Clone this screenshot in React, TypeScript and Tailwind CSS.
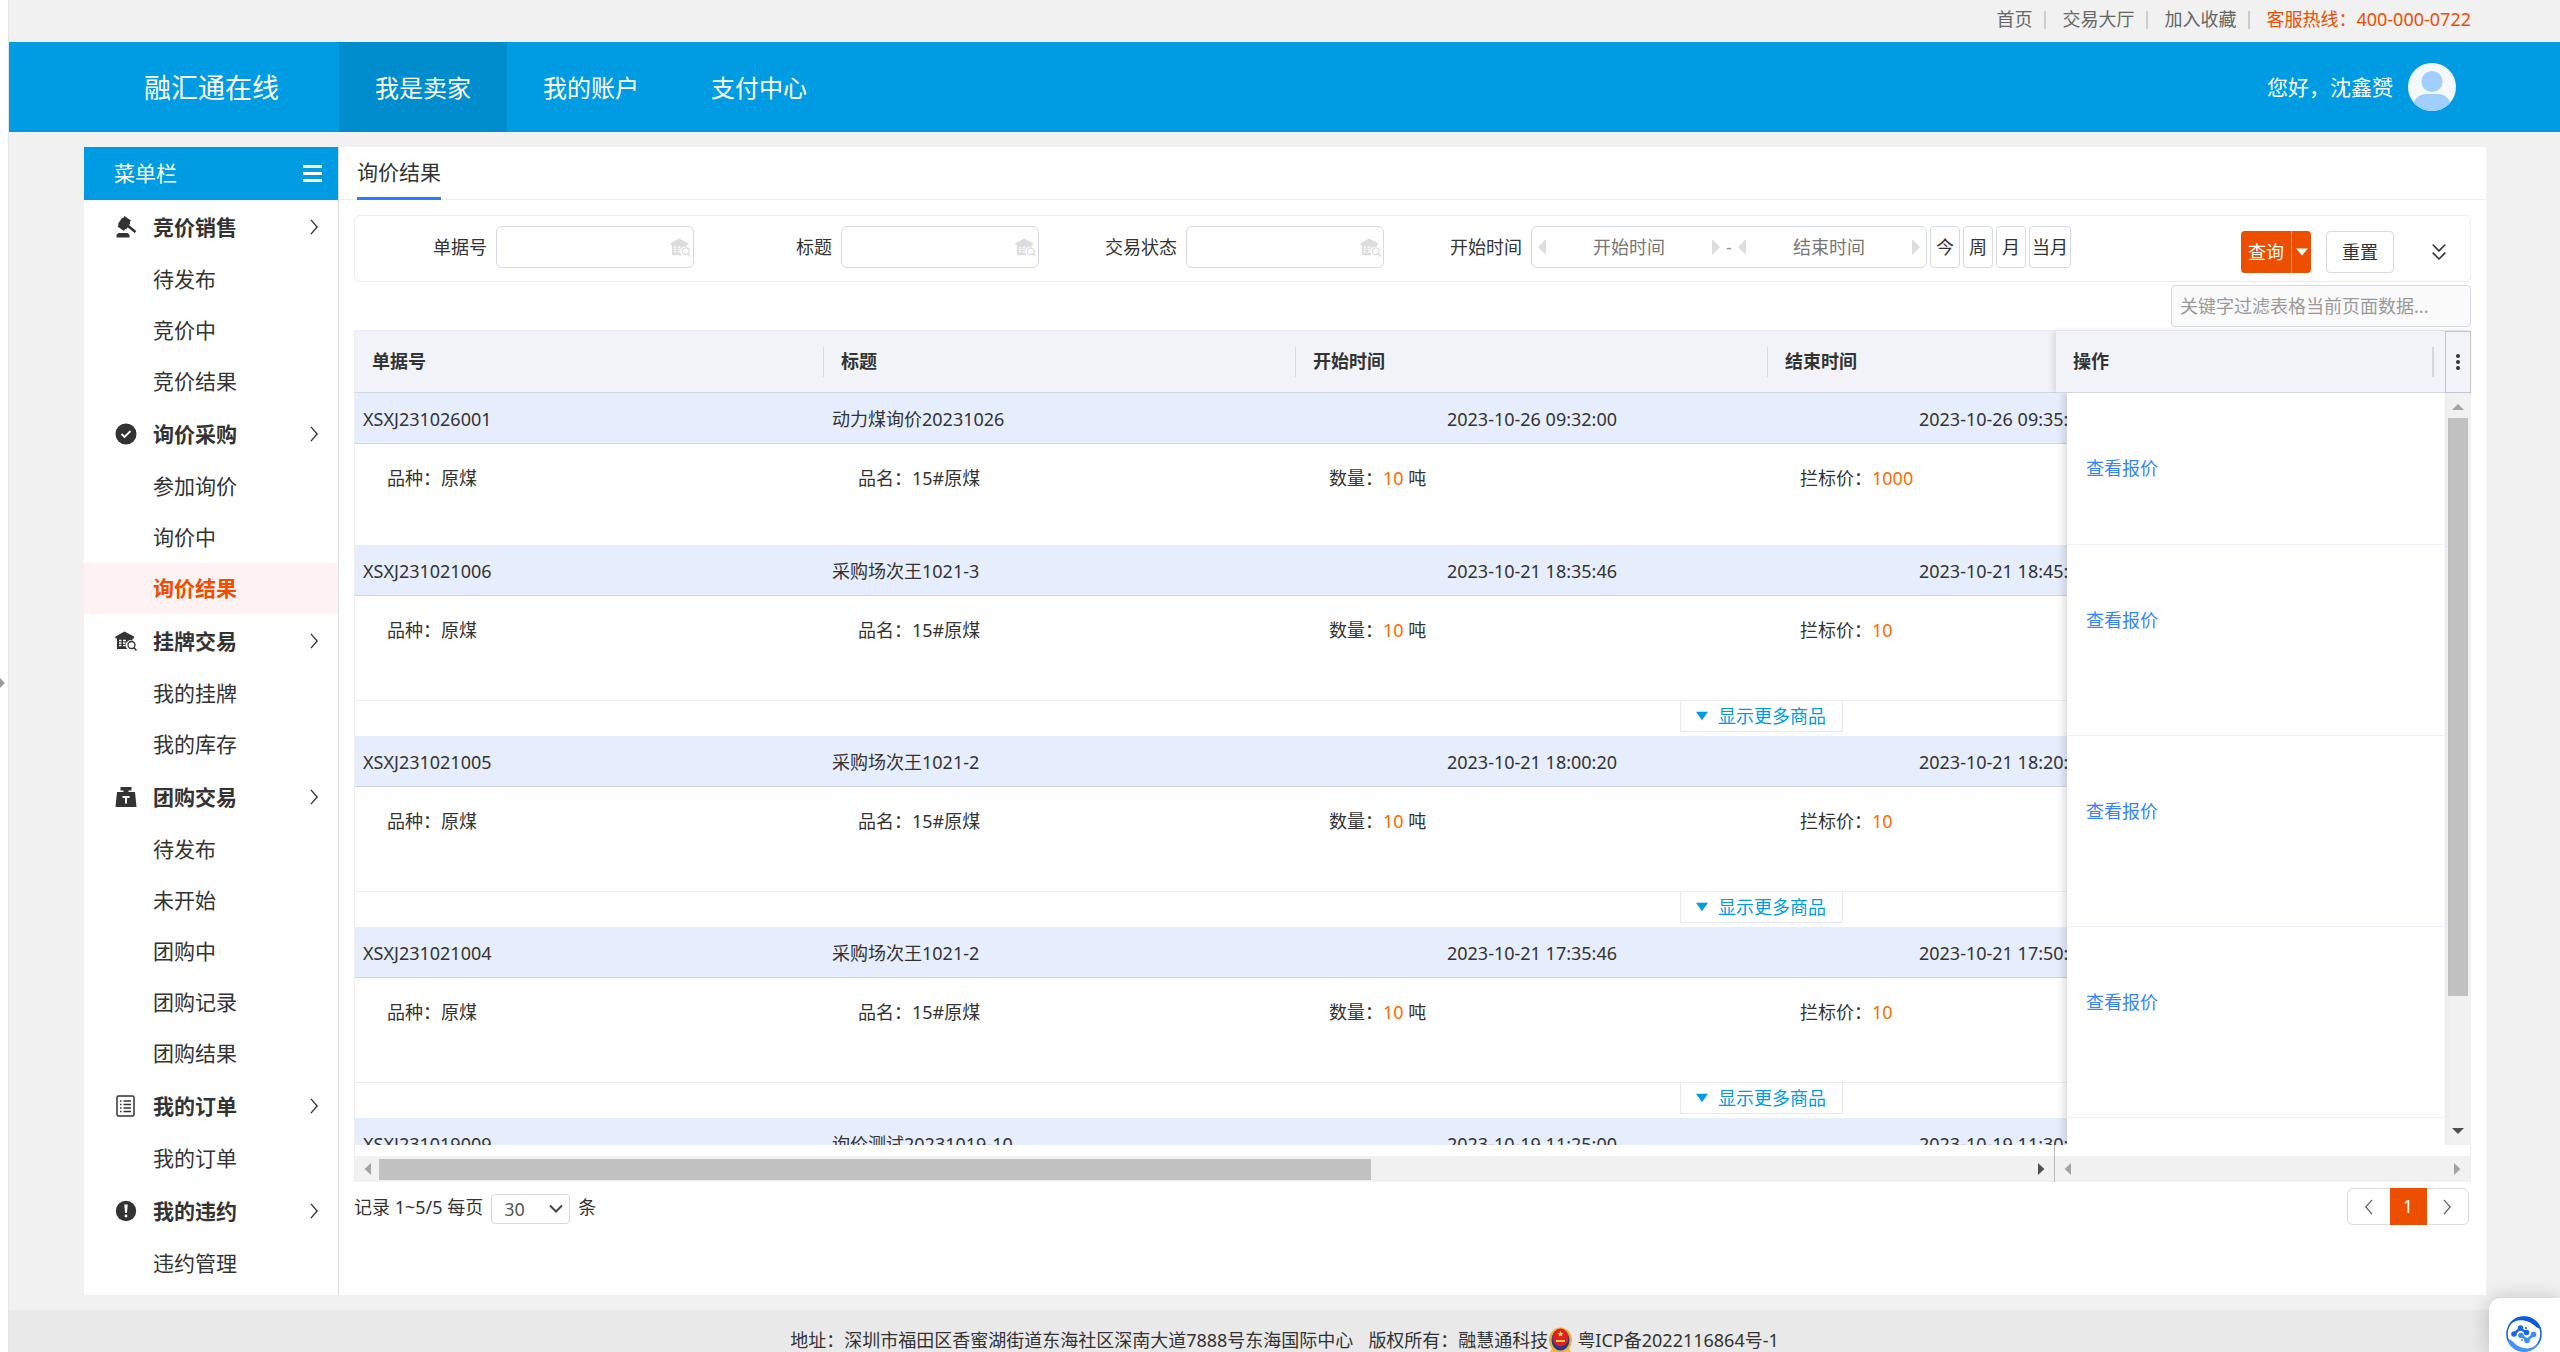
import { useState } from 'react';
import { ChevronsDown } from 'lucide-react';

const menu = [
  { title: '竞价销售', icon: 'gavel', items: ['待发布', '竞价中', '竞价结果'] },
  { title: '询价采购', icon: 'check', items: ['参加询价', '询价中', '询价结果'] },
  { title: '挂牌交易', icon: 'house', items: ['我的挂牌', '我的库存'] },
  { title: '团购交易', icon: 'weight', items: ['待发布', '未开始', '团购中', '团购记录', '团购结果'] },
  { title: '我的订单', icon: 'list', items: ['我的订单'] },
  { title: '我的违约', icon: 'alert', items: ['违约管理'] },
];

const rows = [
  { no: 'XSXJ231026001', title: '动力煤询价20231026', start: '2023-10-26 09:32:00', end: '2023-10-26 09:35:00', price: '1000', more: false },
  { no: 'XSXJ231021006', title: '采购场次王1021-3', start: '2023-10-21 18:35:46', end: '2023-10-21 18:45:46', price: '10', more: true },
  { no: 'XSXJ231021005', title: '采购场次王1021-2', start: '2023-10-21 18:00:20', end: '2023-10-21 18:20:20', price: '10', more: true },
  { no: 'XSXJ231021004', title: '采购场次王1021-2', start: '2023-10-21 17:35:46', end: '2023-10-21 17:50:46', price: '10', more: true },
  { no: 'XSXJ231019009', title: '询价测试20231019-10', start: '2023-10-19 11:25:00', end: '2023-10-19 11:30:00', price: '10', more: true },
];

function HouseIcon({ className }: { className?: string }) {
  return (
    <svg viewBox="0 0 22 22" className={className}>
      <path d="M9.500 1.500 19 6.500v2h-1.500v2a5 5 0 0 0-5 8.500H2V8.500H.5v-2Z" fill="currentColor" />
      <path d="M4 10.500h2.500M8 10.500h3M4 13h2.500M8 13h2.500M4 15.500h2.500M8 15.500h2.500" stroke="#fff" strokeWidth="1.300" />
      <circle cx="16.500" cy="15" r="3.500" fill="none" stroke="currentColor" strokeWidth="1.300" />
      <path d="m18.800 17.600 2.700 2.900" stroke="currentColor" strokeWidth="1.500" />
    </svg>
  );
}

function MenuIcon({ name }: { name: string }) {
  if (name === 'house') return <HouseIcon className="h-[22px] w-[22px]" />;
  return (
    <svg viewBox="0 0 22 22" className="h-[22px] w-[22px]" fill="currentColor">
      {name === 'gavel' && (
        <>
          <path d="m9.500 0 6.500 4.500-1.200 1.600.4 1.400-3.700 5.500-1.500.3L9 15 2.500 10.500l1-1.500-.3-1.500 3.700-5.300 1.500-.4Z" />
          <path d="m12.500 9.500 8 6.500" stroke="currentColor" strokeWidth="2.600" />
          <path d="M3.500 17h9l2 2v2.500h-13V19Z" />
        </>
      )}
      {name === 'check' && (
        <>
          <circle cx="11" cy="11" r="10.500" />
          <path d="m6.500 11 3 3 6-6" fill="none" stroke="#fff" strokeWidth="1.800" />
        </>
      )}
      {name === 'weight' && (
        <>
          <path d="M5.500 1h11v3.500h-3V6H20l1.500 15H.5L2 6h6.500V4.500h-3Z" />
          <path d="M7.500 11h7M11 11v6.500" stroke="#fff" strokeWidth="2" />
        </>
      )}
      {name === 'list' && (
        <>
          <rect x="2" y="1" width="17" height="20" rx="1.500" fill="none" stroke="currentColor" strokeWidth="1.500" />
          <path d="M5 6h1.500M8.500 6h7.500M5 9.500h1.500M8.500 9.500h7.500M5 13h1.500M8.500 13h7.500M5 16.500h1.500M8.500 16.500h7.500" stroke="currentColor" strokeWidth="1.300" />
        </>
      )}
      {name === 'alert' && (
        <>
          <circle cx="11" cy="11" r="10.200" />
          <path d="M9.300 4.500h3.400L12 13h-2Z" fill="#fff" />
          <circle cx="11" cy="16" r="1.400" fill="#fff" />
        </>
      )}
    </svg>
  );
}

function Chevron({ left, className }: { left?: boolean; className?: string }) {
  return (
    <svg viewBox="0 0 10 18" className={className} fill="none" stroke="currentColor" strokeWidth="1.500">
      <path d={left ? 'M9 1 2 9l7 8' : 'M1 1l7 8-7 8'} />
    </svg>
  );
}

function Triangle({ dir, className }: { dir: 'left' | 'right' | 'up' | 'down'; className?: string }) {
  const paths = {
    left: 'M10 0v10L2 5Z',
    right: 'M0 0v10l8-5Z',
    up: 'M0 8h10L5 2Z',
    down: 'M0 2h10L5 8Z',
  };
  return (
    <svg viewBox="0 0 10 10" preserveAspectRatio="none" className={className} fill="currentColor">
      <path d={paths[dir]} />
    </svg>
  );
}

function TopBar() {
  return (
    <div className="flex h-[42px] items-center justify-end bg-[#f1f1f1] pr-[89px] pb-[3px] text-[#666]">
      {['首页', '交易大厅', '加入收藏'].map((t) => (
        <div key={t} className="flex items-center">
          <a href="#">{t}</a>
          <span className="mr-4 ml-3 h-[18px] w-[2px] bg-[#ccc]" />
        </div>
      ))}
      <span className="text-[#ed4e00]">客服热线：400-000-0722</span>
    </div>
  );
}

function Header() {
  return (
    <header className="flex h-[90px] items-center justify-between bg-[#009ce3] pr-[104px] text-white">
      <div className="flex h-full items-center">
        <div className="w-[330px] pl-[135px] text-[27px]">融汇通在线</div>
        <nav className="flex h-full text-[24px]">
          {['我是卖家', '我的账户', '支付中心'].map((t, i) => (
            <a key={t} href="#" className={`flex h-full w-[168px] items-center justify-center ${i === 0 ? 'bg-[#008dcd]' : ''}`}>
              {t}
            </a>
          ))}
        </nav>
      </div>
      <div className="flex items-center gap-[15px] text-[21px]">
        <span>您好，沈鑫赟</span>
        <svg viewBox="0 0 48 48" className="h-12 w-12">
          <clipPath id="face">
            <circle cx="24" cy="24" r="24" />
          </clipPath>
          <g clipPath="url(#face)">
            <rect width="48" height="48" fill="#f4f9ff" />
            <circle cx="24" cy="18.500" r="10.500" fill="#a0ceff" />
            <path d="M4 48c0-10 6-17 14-17h12c8 0 14 7 14 17Z" fill="#a0ceff" />
          </g>
        </svg>
      </div>
    </header>
  );
}

function Sidebar() {
  const [active, setActive] = useState('询价结果');
  return (
    <aside className="w-[255px] shrink-0 border-r border-[#ddd] bg-white pb-[6px] text-[21px]">
      <div className="flex h-[53px] items-center justify-between bg-[#009ce3] pr-4 pl-[30px] text-white">
        <span>菜单栏</span>
        <button aria-label="收起菜单" className="flex w-[19px] flex-col gap-1">
          <span className="h-[3px] bg-white" />
          <span className="h-[3px] bg-white" />
          <span className="h-[3px] bg-white" />
        </button>
      </div>
      {menu.map((group) => (
        <div key={group.title}>
          <button className="flex h-[54px] w-full items-center pr-[19px] pl-[31px] font-bold">
            <MenuIcon name={group.icon} />
            <span className="ml-4 flex-1 text-left">{group.title}</span>
            <Chevron className="h-4 w-[9px]" />
          </button>
          {group.items.map((item) => (
            <a
              key={item}
              href="#"
              onClick={() => setActive(item)}
              className={`flex h-[51px] items-center pl-[69px] ${item === active ? 'bg-[#fef2f3] font-bold text-[#ed4e00]' : ''}`}
            >
              {item}
            </a>
          ))}
        </div>
      ))}
    </aside>
  );
}

function SearchField({ label }: { label: string }) {
  return (
    <label className="flex w-[345px] items-center justify-end">
      {label}
      <span className="mr-[6px] ml-[9px] flex h-[42px] w-[198px] items-center rounded-md border border-[#d5d9e4] pr-[2px]">
        <input className="h-full min-w-0 flex-1 px-2 outline-none" />
        <HouseIcon className="h-[21px] w-[21px] text-[#dcdcdc]" />
      </span>
    </label>
  );
}

function DateField({ label }: { label: string }) {
  return (
    <span className="flex flex-1 items-center justify-between px-1 text-[#ddd]">
      <Triangle dir="left" className="h-4 w-[10px]" />
      <input aria-label={label} placeholder={label} className="w-[120px] text-center text-[#777] outline-none placeholder:text-[#777]" />
      <Triangle dir="right" className="h-4 w-[10px]" />
    </span>
  );
}

function FilterBar() {
  return (
    <form className="mx-[15px] mt-[15px] flex h-[67px] justify-between rounded-md border border-[#eee] pt-[10px]">
      <div className="flex h-[42px] items-center">
        <div className="flex pr-[60px]">
          <SearchField label="单据号" />
          <SearchField label="标题" />
          <SearchField label="交易状态" />
        </div>
        <span>开始时间</span>
        <div className="mr-[3px] ml-[9px] flex h-[42px] w-[396px] items-center rounded-md border border-[#d5d9e4]">
          <DateField label="开始时间" />
          <span className="text-[#999]">-</span>
          <DateField label="结束时间" />
        </div>
        <div className="flex gap-[3px]">
          {['今', '周', '月', '当月'].map((t) => (
            <button key={t} type="button" className="h-[42px] min-w-[30px] rounded border border-[#d5d9e4] px-[2px]">
              {t}
            </button>
          ))}
        </div>
      </div>
      <div className="flex h-[42px] items-center pt-[10px] pr-[17px]">
        <button type="button" className="h-[42px] w-[50px] rounded-l bg-[#ed4e00] text-white">查询</button>
        <button type="button" aria-label="更多查询" className="flex h-[42px] w-5 items-center justify-center rounded-r border-l border-[#f5a37c] bg-[#ed4e00] text-white">
          <Triangle dir="down" className="h-3 w-3" />
        </button>
        <button type="button" className="mx-[15px] h-[42px] w-[68px] rounded border border-[#d5d9e4]">重置</button>
        <button type="button" aria-label="展开" className="ml-4">
          <ChevronsDown className="h-7 w-7" strokeWidth={1.4} />
        </button>
      </div>
    </form>
  );
}

function ResultTable() {
  return (
    <div className="mx-[15px] mt-[3px]">
      <div className="grid grid-cols-[minmax(0,1fr)_415px] border-t border-l border-[#eee] bg-[#f2f3f9]">
        <div className="flex h-[62px] items-center overflow-hidden border-b border-[#d2d6e5] font-bold">
          {['单据号', '标题', '开始时间', '结束时间'].map((t, i) => (
            <div key={t} className={`flex h-[30px] shrink-0 items-center border-r border-[#d5d8e0] pl-[17px] ${i === 0 ? 'w-[469px]' : 'w-[472px]'}`}>
              {t}
            </div>
          ))}
        </div>
        <div className="flex h-[62px] items-center border-b border-[#d2d6e5] pl-[17px] font-bold shadow-[-3px_0_6px_rgba(0,0,0,0.1)]">
          <span>操作</span>
          <span className="mr-[11px] ml-auto h-[30px] w-[2px] bg-[#d5d8e0]" />
          <button aria-label="列设置" className="flex h-[62px] w-[26px] flex-col items-center justify-center gap-[2px] border border-[#c5c6cc]">
            <i className="h-1 w-1 rounded-full bg-[#333]" />
            <i className="h-1 w-1 rounded-full bg-[#333]" />
            <i className="h-1 w-1 rounded-full bg-[#333]" />
          </button>
        </div>
      </div>

      <div className="flex h-[752px] overflow-hidden border-l border-[#eee]">
        <div className="min-w-0 flex-1 overflow-hidden">
          {rows.map((row) => (
            <div key={row.no} className="w-[1920px]">
              <div className="flex h-[51px] items-center border-b border-[#d0d5e0] bg-[#e6edfd] pt-[3px]">
                <div className="w-[469px] pl-2">{row.no}</div>
                <div className="w-[472px] pl-2">{row.title}</div>
                <div className="w-[472px] text-center">{row.start}</div>
                <div className="w-[472px] text-center">{row.end}</div>
              </div>
              <div className={`flex pt-[21px] pl-8 ${row.more ? 'h-[105px] border-b border-[#ebedf3]' : 'h-[101px]'}`}>
                <div className="w-[471px] shrink-0">品种：原煤</div>
                <div className="w-[471px] shrink-0">品名：15#原煤</div>
                <div className="w-[471px] shrink-0">
                  数量：<span className="text-[#ff6a00]">10</span> 吨
                </div>
                <div className="w-[471px] shrink-0">
                  拦标价：<span className="text-[#ff6a00]">{row.price}</span>
                </div>
              </div>
              {row.more && (
                <div className="flex h-[35px] items-start pl-[1325px]">
                  <button className="flex h-[31px] w-[163px] items-center gap-[10px] border border-t-0 border-[#e6e9f0] pl-[15px] text-[#009ce3]">
                    <Triangle dir="down" className="h-[14px] w-3" />
                    显示更多商品
                  </button>
                </div>
              )}
            </div>
          ))}
        </div>
        <div className="z-10 w-[378px] shrink-0 bg-white shadow-[-3px_0_8px_rgba(0,0,0,0.15)]">
          {rows.map((row) => (
            <div key={row.no} className={`border-b border-[#eef1f8] pt-[62px] pl-[19px] ${row.more ? 'h-[191px]' : 'h-[152px]'}`}>
              <a href="#" className="text-[#3385ff]">查看报价</a>
            </div>
          ))}
        </div>
        <div className="flex w-[26px] shrink-0 flex-col items-center bg-[#f1f1f1] pt-[9px] pb-[9px]">
          <Triangle dir="up" className="h-[10px] w-3 text-[#a3a3a3]" />
          <div className="mt-[6px] h-[578px] w-5 bg-[#c1c1c1]" />
          <Triangle dir="down" className="mt-auto h-[10px] w-3 text-[#505050]" />
        </div>
      </div>

      {/* horizontal scrollbars */}
      <div className="grid grid-cols-[minmax(0,1fr)_415px] border-x border-[#eee]">
        <div className="flex border-r border-[#bbb] pt-[11px]">
          <div className="flex h-[26px] flex-1 items-center bg-[#f1f1f1] px-2">
            <Triangle dir="left" className="h-3 w-2 text-[#a3a3a3]" />
            <div className="ml-2 h-[21px] w-[992px] bg-[#c1c1c1]" />
            <Triangle dir="right" className="ml-auto h-3 w-2 text-[#505050]" />
          </div>
        </div>
        <div className="mt-[11px] flex h-[26px] items-center justify-between bg-[#f1f1f1] px-2 text-[#a3a3a3]">
          <Triangle dir="left" className="h-3 w-2" />
          <Triangle dir="right" className="h-3 w-2" />
        </div>
      </div>
    </div>
  );
}

function Pager() {
  return (
    <div className="mr-[17px] ml-[15px] flex justify-between pt-[6px]">
      <div className="flex h-[38px] items-center gap-2">
        <label htmlFor="page-size">记录 1~5/5 每页</label>
        <span className="relative mt-1 flex items-center">
          <select id="page-size" className="h-[30px] w-[79px] appearance-none rounded border border-[#d5d9e4] bg-white pl-3 text-[#555]">
            <option>30</option>
            <option>50</option>
          </select>
          <svg viewBox="0 0 14 10" className="pointer-events-none absolute right-[7px] h-[10px] w-[14px]" fill="none" stroke="#444" strokeWidth="2">
            <path d="m1 1.500 6 6 6-6" />
          </svg>
        </span>
        <span>条</span>
      </div>
      <div className="flex h-[37px] w-[122px] rounded-md border border-[#ddd] text-[#666]">
        <button aria-label="上一页" className="flex flex-1 items-center justify-center">
          <Chevron left className="h-4 w-[9px]" />
        </button>
        <button className="-my-px w-[37px] bg-[#ed4e00] text-white">1</button>
        <button aria-label="下一页" className="flex flex-1 items-center justify-center">
          <Chevron className="h-4 w-[9px]" />
        </button>
      </div>
    </div>
  );
}

function Emblem() {
  return (
    <svg viewBox="0 0 25 28" className="h-7 w-[25px]">
      <path d="M5 18h15l4 10H1Z" fill="#f3c04a" />
      <ellipse cx="12.500" cy="13" rx="11.500" ry="12.500" fill="#e9b13a" />
      <ellipse cx="12.500" cy="13" rx="9" ry="10.500" fill="#26388f" />
      <ellipse cx="12.500" cy="10.500" rx="8" ry="9" fill="#e02020" />
      <path d="m12.500 4 1 2h2l-1.500 1.500.5 2-2-1-2 1 .5-2L9.500 6h2Z" fill="#ffd84a" />
      <path d="M8 13h9v2H8Z" fill="#ffd84a" />
    </svg>
  );
}

function ChatWidget() {
  return (
    <button aria-label="在线客服" className="fixed right-0 bottom-0 flex h-[54px] w-[71px] items-start rounded-tl-xl bg-white pt-[18px] pl-[17px] shadow-[0_0_20px_rgba(0,0,0,0.2)]">
      <svg viewBox="0 0 36 36" className="h-9 w-9">
        <circle cx="18" cy="18" r="17" fill="#fff" stroke="#1a66e0" strokeWidth="1.600" />
        <path d="M2 10C7 1 16-1 24 1.500c6 2 10 7 11 11.500-5-1-6-4-12-7C15 2.500 8 4 2 10Z" fill="#0b5be0" />
        <path d="M34 26c-5 9-14 11-22 8.500-6-2-9-6-10-11.500 5 1 6 5 12 8 8 3 14 1 20-5Z" fill="#4394fa" />
        <g stroke="#1767e6" strokeWidth="2.600" fill="#1767e6">
          <path d="m8 18 6-5.500 6.500 4" fill="none" />
          <circle cx="8" cy="18" r="1.500" />
          <circle cx="14.500" cy="12" r="1.500" />
          <circle cx="20.500" cy="16.500" r="1.500" />
        </g>
        <g stroke="#3d8df7" strokeWidth="2.600" fill="#3d8df7">
          <path d="m15 19.500 6.500 4.500 6-5.500" fill="none" />
          <circle cx="15" cy="19.500" r="1.500" />
          <circle cx="21" cy="24.500" r="1.500" />
          <circle cx="27.500" cy="18.500" r="1.500" />
        </g>
        <circle cx="20" cy="12" r="1.100" fill="#1767e6" />
        <circle cx="16" cy="24" r="1.100" fill="#3d8df7" />
      </svg>
    </button>
  );
}

export default function App() {
  return (
    <div className="flex h-screen overflow-hidden bg-white font-['Noto_Sans','Noto_Sans_CJK_SC',sans-serif] text-[18px] leading-[27px] text-[#333]">
      <div className="flex w-2 shrink-0 items-center pt-[14px] text-[#999]">
        <Triangle dir="right" className="h-[10px] w-[6px]" />
      </div>
      <div className="min-w-0 flex-1 border-l border-[#e5e5e5] bg-[#f1f1f1]">
        <TopBar />
        <Header />
        <div className="mt-[15px] mr-[74px] ml-[75px] flex">
          <Sidebar />
          <main className="min-w-0 flex-1 bg-white">
            <div className="flex h-[53px] border-b border-[#eee] pl-[18px] text-[21px]">
              <button className="-mb-px border-b-3 border-[#2b7bff]">询价结果</button>
            </div>
            <FilterBar />
            <div className="mx-[15px] mt-[3px] flex justify-end">
              <input
                aria-label="关键字过滤"
                placeholder="关键字过滤表格当前页面数据..."
                className="h-[42px] w-[300px] rounded border border-[#d5d9e4] bg-[#fafafa] px-2 outline-none placeholder:text-[#999]"
              />
            </div>
            <ResultTable />
            <Pager />
          </main>
        </div>
        <footer className="mt-[15px] flex h-[60px] items-start justify-center bg-[#e9e9e9] pt-[17px]">
          <span className="mr-[15px]">地址：深圳市福田区香蜜湖街道东海社区深南大道7888号东海国际中心</span>
          <span>版权所有：融慧通科技</span>
          <Emblem />
          <a href="#" className="ml-1">粤ICP备2022116864号-1</a>
        </footer>
      </div>
      <ChatWidget />
    </div>
  );
}
